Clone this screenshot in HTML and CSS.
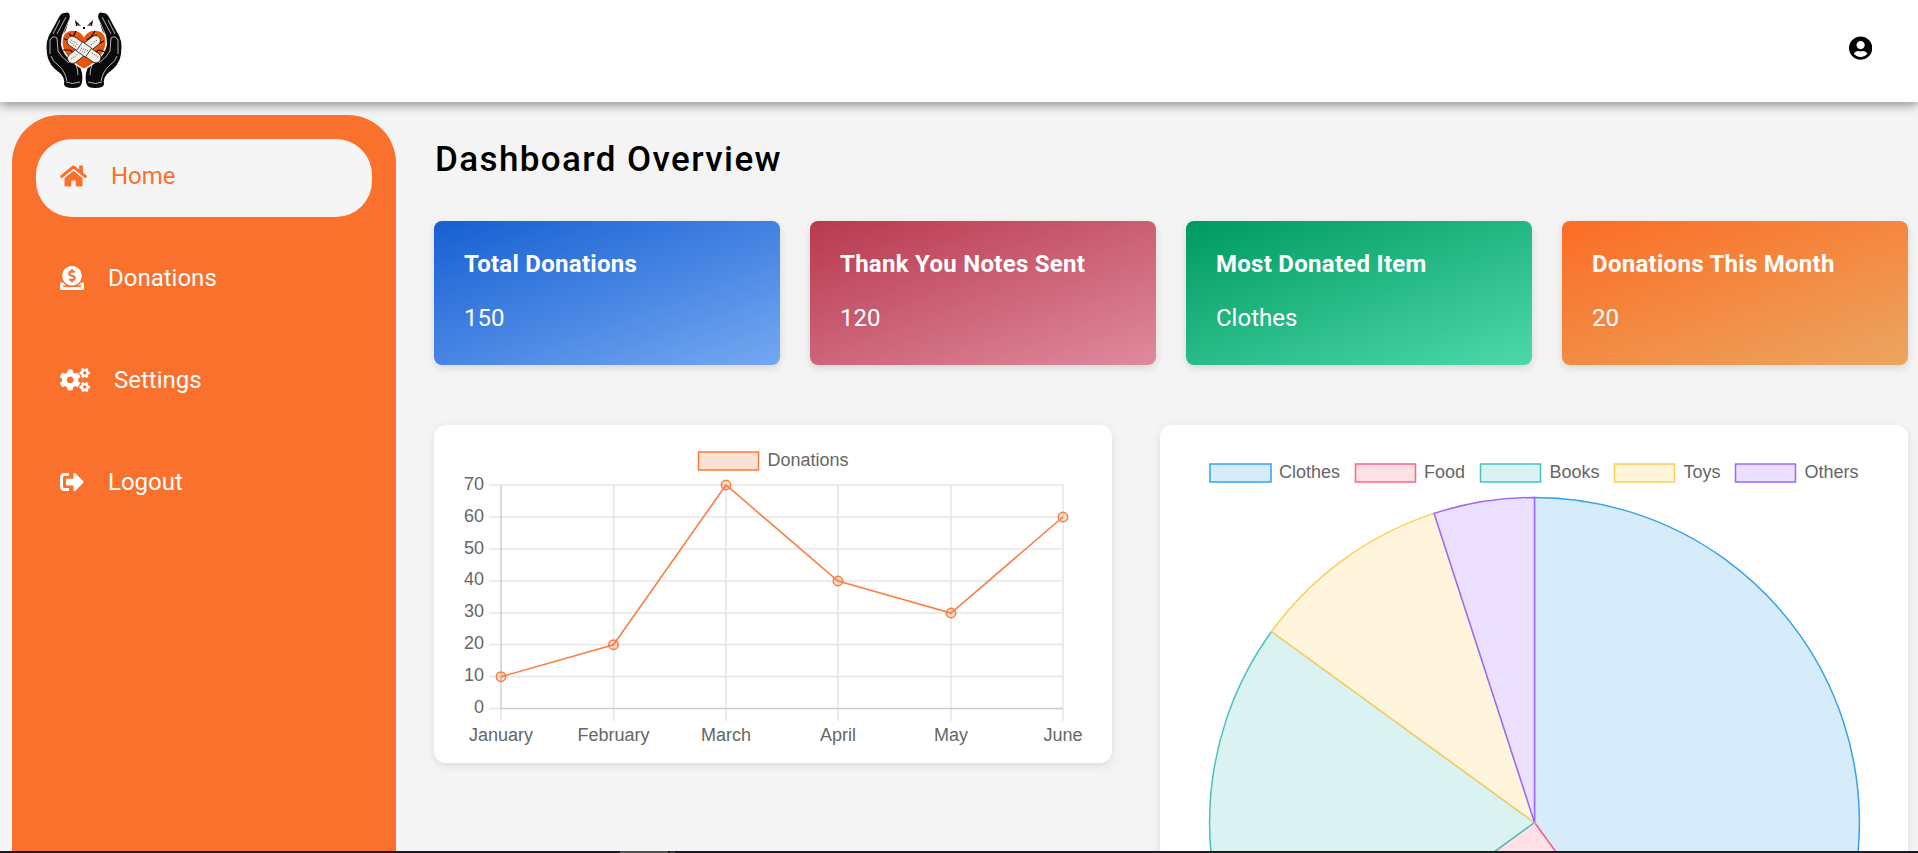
FILE: index.html
```html
<!DOCTYPE html>
<html lang="en">
<head>
<meta charset="utf-8">
<title>Dashboard Overview</title>
<link rel="stylesheet" href="styles.css">
</head>
<body>
<header class="topbar">
  <svg class="logo" viewBox="0 0 90 90" role="img" aria-label="Logo">
    <defs>
      <g id="hand">
        <path fill="#0a0a0d" d="M27 5C31 3 33 7 31 12L27 25L24 34Q25 41 31 46Q42 55 44 65Q45 73 43 77Q42 80 35 80Q26 80 26 76Q27 71 23 66Q10 57 9 46Q7 32 13 24L20 11Q23 4 27 5Z"/>
        <path class="crease" d="M28 9L19 26M31 12L24 28M22 12L15 26M12 46L12 32Q15 27 19 30L20 43Q23 49 31 55M13 48Q14 53 20 57Q27 63 29 73M23 35Q25 44 32 50Q40 56 40 67M28 74Q34 77 42 74"/>
      </g>
    </defs>
    <use href="#hand"/>
    <use href="#hand" transform="translate(92 0) scale(-1 1)"/>
    <path class="heart" d="M46 61.500Q25 50 24 36Q23 23 34 22Q42 21.500 46 28Q50 21.500 58 22Q69 23 68 36Q67 50 46 61.500Z"/>
    <path class="cracks" d="M38 23L35 29L39 33M35 29L31 26M57 23L53 29L49 32M53 29L59 27M26 31L31 32L32 35M66 33L60 36L58 34M25 42L32 42L36 45M67 44L61 42L58 44M36 56L35 52M56 55L56 52"/>
    <g class="plasters">
      <rect x="26.500" y="36.500" width="39" height="10" rx="5" transform="rotate(-38 46 41.500)"/>
      <rect x="26.500" y="36.500" width="39" height="10" rx="5" transform="rotate(35 46 41.500)"/>
      <rect x="40.500" y="36" width="11" height="11" transform="rotate(35 46 41.500)"/>
    </g>
    <path class="dots" d="M33 32L40 37M32 34L38 39M54 45L60 49M53 37L59 32M33 51L40 46M43 40L50 43M42 42L48 45"/>
    <path fill="#0a0a0d" d="M37 12L43 18L38 18ZM55 12L49 18L54 18ZM45 19L47 19L47 21L45 21Z"/>
    <path fill="#e9661b" d="M39 16L43 18L39 18ZM53 16L49 18L53 18Z"/>
  </svg>
  <svg class="user" viewBox="0 0 496 512" role="img" aria-label="Account"><path d="M248 8C111 8 0 119 0 256s111 248 248 248 248-111 248-248S385 8 248 8zm0 96c48.600 0 88 39.400 88 88s-39.400 88-88 88-88-39.400-88-88 39.400-88 88-88zm0 344c-58.700 0-111.300-26.600-146.500-68.200 18.800-35.400 55.600-59.800 98.500-59.800 2.400 0 4.800.4 7.100 1.100 13 4.200 26.600 6.900 40.900 6.900 14.300 0 28-2.700 40.900-6.900 2.300-.7 4.700-1.100 7.100-1.100 42.900 0 79.700 24.400 98.500 59.800C359.300 421.400 306.700 448 248 448z"/></svg>
</header>
<div class="layout">
  <nav class="sidebar">
    <a class="item active"><svg class="w27" viewBox="0 0 576 512"><path d="M280.370 148.260L96 300.110V464a16 16 0 0 0 16 16l112.060-.29a16 16 0 0 0 15.920-16V368a16 16 0 0 1 16-16h64a16 16 0 0 1 16 16v95.640a16 16 0 0 0 16 16.050L464 480a16 16 0 0 0 16-16V300L295.670 148.260a12.190 12.190 0 0 0-15.300 0zM571.600 251.470L488 182.560V44.050a12 12 0 0 0-12-12h-56a12 12 0 0 0-12 12v72.610L318.470 43a48 48 0 0 0-61 0L4.340 251.470a12 12 0 0 0-1.600 16.900l25.500 31A12 12 0 0 0 45.150 301l235.220-193.740a12.190 12.190 0 0 1 15.300 0L530.900 301a12 12 0 0 0 16.900-1.600l25.500-31a12 12 0 0 0-1.700-16.930z"/></svg><span>Home</span></a>
    <a class="item"><svg class="w24" viewBox="0 0 512 512"><path d="M256 416c114.900 0 208-93.100 208-208S370.900 0 256 0 48 93.100 48 208s93.100 208 208 208zM233.800 97.400V80.600c0-9.200 7.400-16.600 16.600-16.600h11.100c9.200 0 16.600 7.400 16.600 16.600v17c15.500.8 30.500 6.100 43 15.400 5.600 4.100 6.200 12.300 1.200 17.100L306 145.600c-3.800 3.700-9.500 3.800-14 1-5.400-3.400-11.400-5.100-17.800-5.100h-38.900c-9 0-16.300 8.200-16.300 18.300 0 8.200 5 15.500 12.100 17.600l62.300 18.700c25.700 7.700 43.700 32.400 43.700 60.100 0 34-26.400 61.500-59.100 62.400v16.800c0 9.200-7.400 16.600-16.600 16.600h-11.100c-9.200 0-16.600-7.400-16.600-16.600v-17c-15.500-.8-30.500-6.100-43-15.400-5.600-4.100-6.200-12.300-1.200-17.100l16.300-15.500c3.800-3.700 9.500-3.800 14-1 5.400 3.400 11.400 5.100 17.800 5.100h38.900c9 0 16.300-8.200 16.300-18.300 0-8.200-5-15.500-12.100-17.600l-62.300-18.700c-25.700-7.700-43.700-32.400-43.700-60.100.1-34 26.400-61.500 59.100-62.400zM480 352h-32.500c-19.600 26-44.600 47.700-73 64h63.800c5.300 0 9.600 3.600 9.600 8v16c0 4.400-4.300 8-9.600 8H73.600c-5.300 0-9.600-3.600-9.600-8v-16c0-4.400 4.300-8 9.600-8h63.800c-28.400-16.300-53.300-38-73-64H32c-17.700 0-32 14.300-32 32v96c0 17.700 14.300 32 32 32h448c17.700 0 32-14.300 32-32v-96c0-17.700-14.300-32-32-32z"/></svg><span>Donations</span></a>
    <a class="item"><svg class="w30" viewBox="0 0 640 512"><path id="cog" d="M512.100 191l-8.200 14.300c-3 5.300-9.400 7.500-15.100 5.400-11.800-4.400-22.600-10.700-32.100-18.600-4.600-3.800-5.800-10.500-2.800-15.700l8.200-14.300c-6.900-8-12.300-17.300-15.900-27.400h-16.500c-6 0-11.200-4.300-12.200-10.300-2-12-2.100-24.600 0-37.100 1-6 6.200-10.400 12.200-10.400h16.500c3.600-10.100 9-19.400 15.900-27.400l-8.200-14.300c-3-5.200-1.900-11.900 2.800-15.700 9.500-7.900 20.400-14.200 32.100-18.600 5.700-2.100 12.100.1 15.100 5.400l8.200 14.300c10.500-1.900 21.200-1.900 31.700 0L552 6.300c3-5.300 9.400-7.500 15.100-5.400 11.800 4.400 22.600 10.700 32.100 18.600 4.600 3.800 5.800 10.500 2.800 15.700l-8.200 14.300c6.900 8 12.300 17.300 15.900 27.400h16.500c6 0 11.200 4.300 12.200 10.300 2 12 2.100 24.600 0 37.100-1 6-6.200 10.400-12.200 10.400h-16.500c-3.600 10.100-9 19.400-15.900 27.400l8.200 14.300c3 5.200 1.900 11.900-2.800 15.700-9.500 7.900-20.400 14.200-32.100 18.600-5.700 2.100-12.100-.1-15.100-5.400l-8.200-14.300c-10.400 1.900-21.200 1.900-31.700 0zm-10.500-58.800c38.500 29.600 82.400-14.300 52.800-52.800-38.500-29.700-82.400 14.300-52.800 52.800z"/><use href="#cog" transform="translate(0 300)"/><path d="M386.300 286.100l33.700 16.800c10.100 5.800 14.500 18.100 10.500 29.100-8.900 24.200-26.400 46.400-42.600 65.800-7.400 8.900-20.200 11.100-30.300 5.300l-29.100-16.800c-16 13.700-34.600 24.600-54.900 31.700v33.600c0 11.600-8.300 21.600-19.700 23.600-24.600 4.200-50.400 4.400-75.900 0-11.500-2-20-11.900-20-23.600V418c-20.300-7.200-38.900-18-54.900-31.700L74 403c-10 5.800-22.900 3.600-30.300-5.300-16.200-19.400-33.300-41.600-42.200-65.700-4-10.900.4-23.200 10.500-29.100l33.300-16.800c-3.900-20.900-3.900-42.400 0-63.400L12 205.800c-10.100-5.800-14.600-18.100-10.500-29 8.900-24.200 26-46.400 42.200-65.800 7.400-8.900 20.200-11.100 30.300-5.300l29.100 16.800c16-13.700 34.600-24.600 54.900-31.700V57.100c0-11.500 8.200-21.500 19.600-23.500 24.600-4.200 50.500-4.400 76-.1 11.500 2 20 11.900 20 23.600v33.600c20.300 7.200 38.900 18 54.900 31.700l29.100-16.800c10-5.800 22.900-3.600 30.300 5.300 16.200 19.400 33.200 41.600 42.100 65.800 4 10.900.1 23.200-10 29.100l-33.700 16.800c3.900 21 3.900 42.500 0 63.500zm-117.600 21.100c59.200-77-28.700-164.900-105.700-105.700-59.200 77 28.700 164.900 105.700 105.700z"/></svg><span>Settings</span></a>
    <a class="item"><svg class="w24" viewBox="0 0 512 512"><path d="M497 273L329 441c-15 15-41 4.500-41-17v-96H152c-13.300 0-24-10.700-24-24v-96c0-13.300 10.700-24 24-24h136V88c0-21.400 25.900-32 41-17l168 168c9.300 9.400 9.300 24.600 0 34zM192 436v-40c0-6.600-5.400-12-12-12H96c-17.700 0-32-14.300-32-32V160c0-17.700 14.300-32 32-32h84c6.600 0 12-5.400 12-12V76c0-6.600-5.400-12-12-12H96c-53 0-96 43-96 96v192c0 53 43 96 96 96h84c6.600 0 12-5.400 12-12z"/></svg><span>Logout</span></a>
  </nav>
  <main class="content">
    <h1>Dashboard Overview</h1>
    <section class="stats">
      <article class="stat blue"><h2>Total Donations</h2><p>150</p></article>
      <article class="stat red"><h2>Thank You Notes Sent</h2><p>120</p></article>
      <article class="stat green"><h2>Most Donated Item</h2><p>Clothes</p></article>
      <article class="stat orange"><h2>Donations This Month</h2><p>20</p></article>
    </section>
    <section class="charts">
      <div class="panel line-panel">
        <svg class="chart" width="678" height="338" viewBox="434 425 678 338">
          <rect class="swatch donations" x="698.500" y="452" width="60" height="18"/>
          <text x="767.500" y="466">Donations</text>
          <path class="grid" d="M489 485H1063M489 517H1063M489 549H1063M489 581H1063M489 613H1063M489 644.500H1063M489 676.500H1063M489 708.500H1063M501 485V721M613.700 485V721M726 485V721M838 485V721M951 485V721M1063 485V721"/>
          <path class="grid" d="M501 485V708.500H1063"/>
          <g class="ticks">
            <text x="484" y="490">70</text><text x="484" y="522">60</text><text x="484" y="554">50</text><text x="484" y="585">40</text><text x="484" y="617">30</text><text x="484" y="649">20</text><text x="484" y="681">10</text><text x="484" y="713">0</text>
          </g>
          <g class="months">
            <text x="501" y="741">January</text><text x="613.500" y="741">February</text><text x="726" y="741">March</text><text x="838" y="741">April</text><text x="951" y="741">May</text><text x="1063" y="741">June</text>
          </g>
          <path class="series" d="M501 676.700L613.500 644.700L726 485L838 581L951 613L1063 517"/>
          <g class="points">
            <circle cx="501" cy="676.700" r="4.700"/><circle cx="613.500" cy="644.700" r="4.700"/><circle cx="726" cy="485" r="4.700"/><circle cx="838" cy="581" r="4.700"/><circle cx="951" cy="613" r="4.700"/><circle cx="1063" cy="517" r="4.700"/>
          </g>
        </svg>
      </div>
      <div class="panel pie-panel">
        <svg class="chart" width="748" height="428" viewBox="1160 425 748 428">
          <rect class="swatch clothes" x="1210" y="464" width="61" height="18"/><text x="1279" y="478">Clothes</text>
          <rect class="swatch food" x="1355.500" y="464" width="60" height="18"/><text x="1424" y="478">Food</text>
          <rect class="swatch books" x="1480.500" y="464" width="60" height="18"/><text x="1549.500" y="478">Books</text>
          <rect class="swatch toys" x="1614.500" y="464" width="60" height="18"/><text x="1683.500" y="478">Toys</text>
          <rect class="swatch others" x="1735.500" y="464" width="60" height="18"/><text x="1804.500" y="478">Others</text>
          <path class="clothes" d="M1534.500 822.500V497.500A325 325 0 0 1 1725.500 1085.400Z"/>
          <path class="food" d="M1534.500 822.500L1725.500 1085.400A325 325 0 0 1 1271.600 1013.500Z"/>
          <path class="books" d="M1534.500 822.500L1271.600 1013.500A325 325 0 0 1 1271.600 631.500Z"/>
          <path class="toys" d="M1534.500 822.500L1271.600 631.500A325 325 0 0 1 1434.100 513.400Z"/>
          <path class="others" d="M1534.500 822.500L1434.100 513.400A325 325 0 0 1 1534.500 497.500Z"/>
        </svg>
      </div>
    </section>
  </main>
</div>
<div class="bottom-edge"><i></i><b></b></div>
</body>
</html>
```
FILE: styles.css
```css
* { box-sizing: border-box; }
body {
  margin: 0;
  height: 853px;
  overflow: hidden;
  display: flex;
  flex-direction: column;
  background: #f4f4f4;
  font-family: Roboto, "Liberation Sans", sans-serif;
  color: #000;
}
.topbar {
  flex: none;
  height: 102px;
  display: flex;
  justify-content: space-between;
  align-items: center;
  padding: 0 46px 6px 38px;
  background: #fff;
  box-shadow: 0 3px 10px rgba(0, 0, 0, .42);
}
.logo { width: 90px; height: 90px; margin-top: 9px; }
.crease { fill: none; stroke: #e2e0d8; stroke-width: .8; }
.heart { fill: #e9560b; stroke: #fff; stroke-width: 1.5; }
.cracks { fill: none; stroke: #1b0b05; stroke-width: 1.2; }
.plasters { fill: #f4f1ea; stroke: #1a1512; stroke-width: .7; }
.dots { stroke: #77716b; stroke-width: 1.1; stroke-dasharray: 1 1.2; }
.user { width: 23.25px; height: 24px; }
.layout { flex: 1; min-height: 0; display: flex; align-items: stretch; }
.sidebar {
  flex: none;
  width: 384px;
  margin: 13px 38px 0 12px;
  padding: 24px;
  border-radius: 48px 48px 0 0;
  background: #fa702d;
  display: flex;
  flex-direction: column;
  gap: 24px;
}
.item {
  flex: none;
  height: 78px;
  display: flex;
  align-items: center;
  gap: 24px;
  padding: 0 24px 5px;
  border-radius: 36px;
  color: #fff;
  font-size: 24px;
  line-height: 30px;
}
.item svg { fill: currentColor; height: 24px; }
.item span { padding-top: 1px; }
.active { background: #f5f5f5; color: #fa702d; }
.w24 { width: 24px; }
.w27 { width: 27px; }
.w30 { width: 30px; }
.content { flex: none; width: 1474px; }
h1 { margin: 37px 0 40px 1px; font-size: 35px; line-height: 42px; font-weight: 500; letter-spacing: 1.4px; }
.stats { display: grid; grid-template-columns: repeat(4, 346px); gap: 30px; }
.stat {
  height: 144px;
  padding: 28px 30px;
  border-radius: 8px;
  color: #fff;
  box-shadow: 0 3px 8px rgba(0, 0, 0, .12);
}
.stat h2 { margin: 0 0 24px; font-size: 24px; line-height: 30px; font-weight: 700; letter-spacing: .28px; }
.stat p { margin: 0; font-size: 24px; line-height: 30px; }
.blue { background: linear-gradient(160deg, #165fd2, #74a8f2); }
.red { background: linear-gradient(160deg, #b8394f, #e08a9e); }
.green { background: linear-gradient(160deg, #009962, #4cd9aa); }
.orange { background: linear-gradient(160deg, #fc6c25, #eba65f); }
.charts { display: flex; justify-content: space-between; align-items: flex-start; margin-top: 60px; }
.panel { background: #fff; box-shadow: 0 3px 9px rgba(0, 0, 0, .1); }
.line-panel { width: 678px; height: 338px; border-radius: 12px; }
.pie-panel { width: 748px; height: 428px; border-radius: 12px 12px 0 0; }
.chart { display: block; }
.chart text { font: 18px "Liberation Sans", sans-serif; fill: #666; }
.ticks text { text-anchor: end; }
.months text { text-anchor: middle; }
.grid { fill: none; stroke: rgba(0, 0, 0, .1); stroke-width: 1.5; }
.donations { fill: #fee1d5; stroke: #fa7a3c; }
.series { fill: none; stroke: #fb7f45; stroke-width: 1.6; }
.points { fill: rgba(250, 112, 45, .2); stroke: #fb7b40; stroke-width: 1.5; }
.swatch, .pie-panel path { stroke-width: 1.5; }
.clothes { fill: #d7ecfb; stroke: #36a2eb; }
.food { fill: #ffe0e6; stroke: #ff6384; }
.books { fill: #dbf2f2; stroke: #4bc0c0; }
.toys { fill: #fff5dd; stroke: #ffcd56; }
.others { fill: #ebe0ff; stroke: #9966ff; }
.bottom-edge { position: absolute; left: 0; right: 0; top: 851px; height: 2px; display: flex; background: #1b1c1f; }
.bottom-edge i { width: 48px; margin-left: 620px; background: #505050; }
.bottom-edge b { width: 5px; margin-left: 2px; background: #383838; }
```
